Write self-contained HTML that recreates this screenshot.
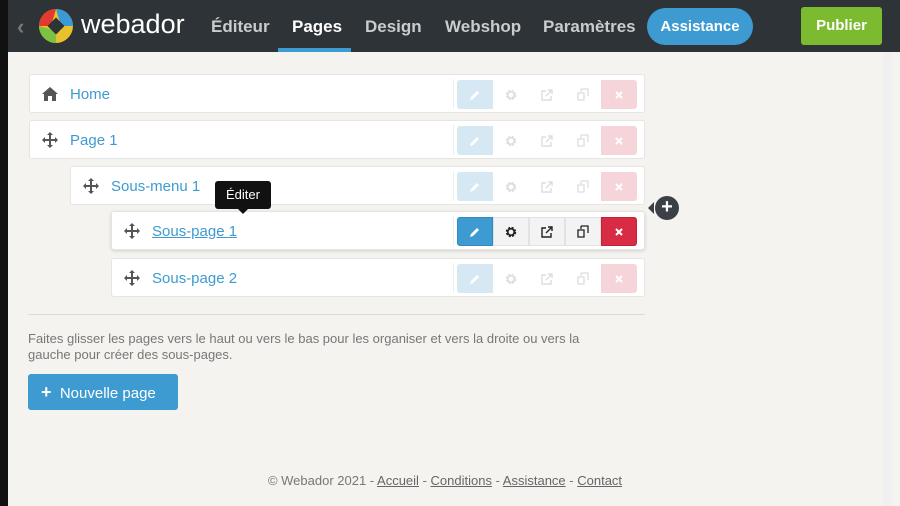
<!DOCTYPE html><html><head><meta charset="utf-8"><style>
*{margin:0;padding:0;box-sizing:border-box}
body{width:900px;height:506px;overflow:hidden;background:#f4f3f0;font-family:"Liberation Sans",sans-serif;position:relative}
.hd{position:absolute;left:0;top:0;width:900px;height:52px;background:#2e3337}
.blk{position:absolute;left:0;top:0;width:8px;height:506px;background:#111}
.nav{position:absolute;top:17px;color:#c9ccce;font-size:17px;font-weight:bold}
.row{position:absolute;height:39px;background:#fff;border:1px solid #e6e5e2;border-radius:3px}
.row .mv{position:absolute;left:11px;top:10px}
.row .t{position:absolute;left:40px;top:11px;color:#3d9bd2;font-size:15px}
.row .sep{position:absolute;top:4px;height:30px;border-left:1px solid #eee}
.bt{position:absolute;top:5px;height:29px;display:flex}
.bt div{width:36px;height:29px;display:flex;align-items:center;justify-content:center;font-size:13px}
.dim div{color:#ddd}
.dim div:nth-child(1){background:#d5e8f4;color:#fff;border-radius:3px 0 0 3px}
.dim div:nth-child(5){background:#f6d5da;color:#fff;border-radius:0 3px 3px 0}
.on div{background:#f3f3f3;border:1px solid #e2e2e2;color:#222}
.on div:nth-child(1){background:#3d9bd2;color:#fff;border-color:#3388c0;border-radius:3px 0 0 3px}
.on div:nth-child(5){background:#d82b44;color:#fff;border-color:#c02238;border-radius:0 3px 3px 0}
a{color:#666;text-decoration:underline}
</style></head><body>
<svg width="0" height="0" style="position:absolute"><defs>
<g id="mv"><path d="M9 1L6 4h2v4H4V6L1 9l3 3v-2h4v4H6l3 3 3-3h-2v-4h4v2l3-3-3-3v2h-4V4h2z" fill="#555"/></g>
<g id="pen"><path d="M2 12l1-3 6-6 2 2-6 6z" fill="currentColor"/></g>
<g id="gear"><circle cx="7" cy="7" r="4" fill="none" stroke="currentColor" stroke-width="2.4" stroke-dasharray="2 1.2"/><circle cx="7" cy="7" r="3.2" fill="none" stroke="currentColor" stroke-width="1.6"/></g>
<g id="ext"><path d="M6 3H2v9h9V8M8 2h4v4M12 2L6 8" fill="none" stroke="currentColor" stroke-width="1.4"/></g>
<g id="cp"><path d="M5 1h7v7M2 5h6v7H2z" fill="none" stroke="currentColor" stroke-width="1.3"/><path d="M5 4V1" stroke="currentColor" stroke-width="1.3"/></g>
<g id="x"><path d="M4 4l6 6M10 4l-6 6" stroke="currentColor" stroke-width="2"/></g>
</defs></svg>
<div class="hd">
<div style="position:absolute;left:17px;top:14px;color:#777;font-size:22px;font-weight:bold">‹</div>
<svg style="position:absolute;left:38px;top:8px" width="36" height="36" viewBox="0 0 36 36"><circle cx="18" cy="18" r="17" fill="#e8c22a"/><path d="M18 1A17 17 0 0 0 1 18h12z" fill="#e23a2e"/><path d="M18 1A17 17 0 0 1 35 18H23z" fill="#3b9ad6"/><path d="M1 18A17 17 0 0 0 18 35V23z" fill="#7dc142"/><rect x="12" y="12" width="12" height="12" transform="rotate(45 18 18)" fill="#2e3337"/></svg>
<div style="position:absolute;left:81px;top:9px;color:#fff;font-size:27px">webador</div>
<div class="nav" style="left:211px">Éditeur</div>
<div class="nav" style="left:292px;color:#fff">Pages</div>
<div style="position:absolute;left:278px;top:48px;width:73px;height:4px;background:#3d9bd2"></div>
<div class="nav" style="left:365px">Design</div>
<div class="nav" style="left:445px">Webshop</div>
<div class="nav" style="left:543px">Paramètres</div>
<div style="position:absolute;left:647px;top:8px;width:106px;height:37px;border-radius:19px;background:#3d9bd2;color:#fff;font-weight:bold;font-size:15px;text-align:center;line-height:37px">Assistance</div>
<div style="position:absolute;left:801px;top:7px;width:81px;height:38px;border-radius:3px;background:#7cba2f;color:#fff;font-weight:bold;font-size:15px;text-align:center;line-height:38px">Publier</div>
</div>
<div class="blk"></div>
<div style="position:absolute;left:883px;top:52px;width:9px;height:454px;background:#f0f0f0"></div>

<div class="row" style="left:29px;top:74px;width:616px"><svg class="mv" width="18" height="18" viewBox="0 0 18 18"><path d="M9 2L1 9h2v7h4v-5h4v5h4V9h2z" fill="#555"/></svg><span class="t">Home</span><span class="sep" style="left:423px"></span><div class="bt dim" style="left:427px"><div><svg width="14" height="14"><use href="#pen"/></svg></div><div><svg width="14" height="14"><use href="#gear"/></svg></div><div><svg width="14" height="14"><use href="#ext"/></svg></div><div><svg width="14" height="14"><use href="#cp"/></svg></div><div><svg width="14" height="14"><use href="#x"/></svg></div></div></div>
<div class="row" style="left:29px;top:120px;width:616px"><svg class="mv" width="18" height="18"><use href="#mv"/></svg><span class="t">Page 1</span><span class="sep" style="left:423px"></span><div class="bt dim" style="left:427px"><div><svg width="14" height="14"><use href="#pen"/></svg></div><div><svg width="14" height="14"><use href="#gear"/></svg></div><div><svg width="14" height="14"><use href="#ext"/></svg></div><div><svg width="14" height="14"><use href="#cp"/></svg></div><div><svg width="14" height="14"><use href="#x"/></svg></div></div></div>
<div class="row" style="left:70px;top:166px;width:575px"><svg class="mv" width="18" height="18"><use href="#mv"/></svg><span class="t">Sous-menu 1</span><span class="sep" style="left:382px"></span><div class="bt dim" style="left:386px"><div><svg width="14" height="14"><use href="#pen"/></svg></div><div><svg width="14" height="14"><use href="#gear"/></svg></div><div><svg width="14" height="14"><use href="#ext"/></svg></div><div><svg width="14" height="14"><use href="#cp"/></svg></div><div><svg width="14" height="14"><use href="#x"/></svg></div></div></div>
<div class="row" style="left:111px;top:211px;width:534px;box-shadow:0 1px 3px rgba(0,0,0,.15)"><svg class="mv" width="18" height="18"><use href="#mv"/></svg><span class="t" style="text-decoration:underline">Sous-page 1</span><span class="sep" style="left:341px"></span><div class="bt on" style="left:345px"><div><svg width="14" height="14"><use href="#pen"/></svg></div><div><svg width="14" height="14"><use href="#gear"/></svg></div><div><svg width="14" height="14"><use href="#ext"/></svg></div><div><svg width="14" height="14"><use href="#cp"/></svg></div><div><svg width="14" height="14"><use href="#x"/></svg></div></div></div>
<div class="row" style="left:111px;top:258px;width:534px"><svg class="mv" width="18" height="18"><use href="#mv"/></svg><span class="t">Sous-page 2</span><span class="sep" style="left:341px"></span><div class="bt dim" style="left:345px"><div><svg width="14" height="14"><use href="#pen"/></svg></div><div><svg width="14" height="14"><use href="#gear"/></svg></div><div><svg width="14" height="14"><use href="#ext"/></svg></div><div><svg width="14" height="14"><use href="#cp"/></svg></div><div><svg width="14" height="14"><use href="#x"/></svg></div></div></div>

<div style="position:absolute;left:215px;top:181px;width:56px;height:28px;background:#111;border-radius:3px;color:#fff;font-size:13px;text-align:center;line-height:28px">Éditer</div>
<div style="position:absolute;left:237px;top:208px;border:6px solid transparent;border-top-color:#111"></div>
<div style="position:absolute;left:655px;top:196px;width:24px;height:24px;border-radius:50%;background:#3a4045;color:#fff;font-weight:bold;font-size:20px;text-align:center;line-height:23px">+</div>
<div style="position:absolute;left:648px;top:202px;border:6px solid transparent;border-right-color:#3a4045;border-left:0"></div>

<div style="position:absolute;left:28px;top:314px;width:617px;border-top:1px solid #dcdbd8"></div>
<div style="position:absolute;left:28px;top:331px;width:585px;color:#777;font-size:13px;line-height:16px">Faites glisser les pages vers le haut ou vers le bas pour les organiser et vers la droite ou vers la gauche pour créer des sous-pages.</div>
<div style="position:absolute;left:28px;top:374px;width:150px;height:36px;background:#3d9bd2;border-radius:3px;color:#fff;font-size:15px;line-height:36px;padding-left:13px"><b style="font-size:18px">+</b>&nbsp; Nouvelle page</div>
<div style="position:absolute;left:0;width:890px;top:473px;text-align:center;color:#777;font-size:13px">© Webador 2021 - <a>Accueil</a> - <a>Conditions</a> - <a>Assistance</a> - <a>Contact</a></div>
</body></html>
